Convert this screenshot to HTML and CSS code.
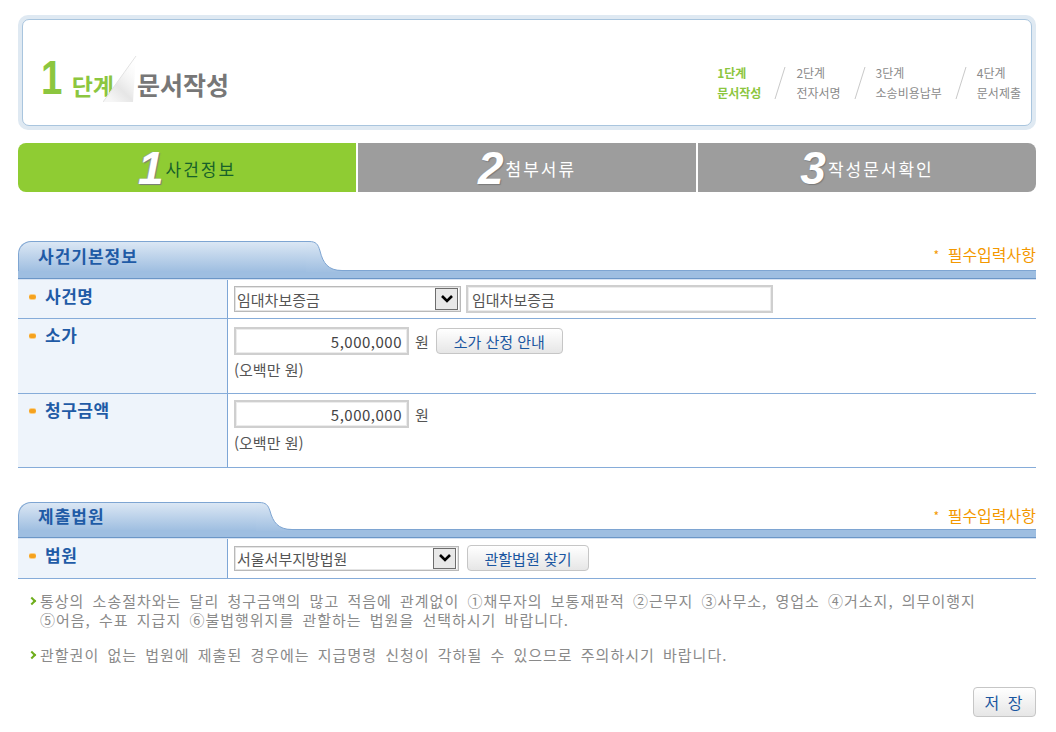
FILE: index.html
```html
<!DOCTYPE html>
<html lang="ko">
<head>
    <meta charset="UTF-8">
    <meta name="viewport" content="width=device-width, initial-scale=1.0">
    <title>지급명령 신청 - 문서작성</title>
    <link rel="stylesheet" href="styles.css">
</head>
<body>

<div class="wrap">

    <!-- 단계 헤더 -->
    <div class="head">
        <div class="head-in">
            <div class="title">
                <span class="title-num">1</span>
                <span class="title-step">단계</span>
                <svg class="title-fold" width="34" height="50" viewBox="0 0 34 50">
                    <defs>
                        <linearGradient id="fold" x1="1" y1="0" x2="0.3" y2="1">
                            <stop offset="0" stop-color="#ffffff" stop-opacity="0"/>
                            <stop offset="0.7" stop-color="#e6e6e6"/>
                            <stop offset="1" stop-color="#f6f6f6"/>
                        </linearGradient>
                    </defs>
                    <polygon points="33,2 0,48 30,48" fill="url(#fold)"/>
                    <line x1="33" y1="2" x2="0" y2="48" stroke="#e2e2e2" stroke-width="1"/>
                </svg>
                <span class="title-name">문서작성</span>
            </div>
            <ul class="step-list">
                <li class="on"><span>1단계</span><span>문서작성</span></li>
                <li class="sep"><svg width="14" height="34"><line x1="12" y1="1" x2="2" y2="33" stroke="#c9c9c9"/></svg></li>
                <li><span>2단계</span><span>전자서명</span></li>
                <li class="sep"><svg width="14" height="34"><line x1="12" y1="1" x2="2" y2="33" stroke="#c9c9c9"/></svg></li>
                <li><span>3단계</span><span>소송비용납부</span></li>
                <li class="sep"><svg width="14" height="34"><line x1="12" y1="1" x2="2" y2="33" stroke="#c9c9c9"/></svg></li>
                <li><span>4단계</span><span>문서제출</span></li>
            </ul>
        </div>
    </div>

    <!-- 작성 단계 탭 -->
    <div class="steps">
        <div class="step active"><span class="step-num">1</span><span class="step-txt">사건정보</span></div>
        <div class="step"><span class="step-num">2</span><span class="step-txt">첨부서류</span></div>
        <div class="step last"><span class="step-num">3</span><span class="step-txt">작성문서확인</span></div>
    </div>

    <!-- 사건기본정보 -->
    <div class="section">
        <div class="sec-head">
            <div class="sec-top">
                <div class="tab">사건기본정보</div>
                <svg class="tab-curve" width="36" height="31" viewBox="0 0 36 31">
                    <defs>
                        <linearGradient id="tabg1" x1="0" y1="0" x2="0" y2="1">
                            <stop offset="0" stop-color="#dbe7f4"/>
                            <stop offset="1" stop-color="#a0bfe1"/>
                        </linearGradient>
                    </defs>
                    <path d="M0,0.5 L3,0.5 C10,0.5 12,3 14,10 C17,22 22,29.5 36,29.5 L36,31 L0,31 Z" fill="url(#tabg1)"/>
                    <path d="M0,0.5 L3,0.5 C10,0.5 12,3 14,10 C17,22 22,29.5 36,29.5" fill="none" stroke="#7ea5d2"/>
                </svg>
                <div class="req"><span class="star">*</span> 필수입력사항</div>
            </div>
            <div class="sec-bar"></div>
        </div>

        <table class="form-table">
            <tr class="row-1">
                <th><span class="dot"></span>사건명</th>
                <td>
                    <div class="field-line">
                        <span class="sel sel-case">
                            <select>
                                <option>임대차보증금</option>
                            </select>
                            <span class="sel-arrow"><svg width="14" height="10" viewBox="0 0 14 10"><path d="M2,2 L7,7 L12,2" fill="none" stroke="#000" stroke-width="2.6"/></svg></span>
                        </span>
                        <input type="text" class="txt txt-case" value="임대차보증금">
                    </div>
                </td>
            </tr>
            <tr class="row-2">
                <th><span class="dot"></span>소가</th>
                <td>
                    <div class="field-line">
                        <input type="text" class="txt txt-money" value="5,000,000">
                        <span class="unit">원</span>
                        <button type="button" class="btn btn-guide">소가 산정 안내</button>
                    </div>
                    <div class="hangul">(오백만 원)</div>
                </td>
            </tr>
            <tr class="row-3">
                <th><span class="dot"></span>청구금액</th>
                <td>
                    <div class="field-line">
                        <input type="text" class="txt txt-money" value="5,000,000">
                        <span class="unit">원</span>
                    </div>
                    <div class="hangul">(오백만 원)</div>
                </td>
            </tr>
        </table>
    </div>

    <!-- 제출법원 -->
    <div class="section section-court">
        <div class="sec-head">
            <div class="sec-top">
                <div class="tab">제출법원</div>
                <svg class="tab-curve" width="36" height="29" viewBox="0 0 36 29">
                    <defs>
                        <linearGradient id="tabg2" x1="0" y1="0" x2="0" y2="1">
                            <stop offset="0" stop-color="#dbe7f4"/>
                            <stop offset="1" stop-color="#a0bfe1"/>
                        </linearGradient>
                    </defs>
                    <path d="M0,0.5 L3,0.5 C10,0.5 12,3 14,9 C17,20 22,27.5 36,27.5 L36,29 L0,29 Z" fill="url(#tabg2)"/>
                    <path d="M0,0.5 L3,0.5 C10,0.5 12,3 14,9 C17,20 22,27.5 36,27.5" fill="none" stroke="#7ea5d2"/>
                </svg>
                <div class="req"><span class="star">*</span> 필수입력사항</div>
            </div>
            <div class="sec-bar"></div>
        </div>

        <table class="form-table">
            <tr class="row-court">
                <th><span class="dot"></span>법원</th>
                <td>
                    <div class="field-line">
                        <span class="sel sel-court">
                            <select>
                                <option>서울서부지방법원</option>
                            </select>
                            <span class="sel-arrow"><svg width="14" height="10" viewBox="0 0 14 10"><path d="M2,2 L7,7 L12,2" fill="none" stroke="#000" stroke-width="2.6"/></svg></span>
                        </span>
                        <button type="button" class="btn btn-court">관할법원 찾기</button>
                    </div>
                </td>
            </tr>
        </table>

        <div class="notes">
            <p>통상의 소송절차와는 달리 청구금액의 많고 적음에 관계없이 ①채무자의 보통재판적 ②근무지 ③사무소, 영업소 ④거소지, 의무이행지<br>⑤어음, 수표 지급지 ⑥불법행위지를 관할하는 법원을 선택하시기 바랍니다.</p>
            <p>관할권이 없는 법원에 제출된 경우에는 지급명령 신청이 각하될 수 있으므로 주의하시기 바랍니다.</p>
        </div>
    </div>

    <div class="actions">
        <button type="button" class="btn btn-save">저 장</button>
    </div>

</div>

</body>
</html>
```

FILE: styles.css
```css
body {
    margin: 0;
    padding: 0;
    background-color: #fff;
    font-family: "Noto Sans CJK KR", "Liberation Sans", sans-serif;
    color: #555;
}

.wrap {
    width: 1018px;
    margin: 15px 0 0 18px;
}

/* header */
.head {
    background-color: #dfe9f2;
    border-radius: 10px;
    padding: 4px;
}

.head-in {
    height: 105px;
    background-color: #fff;
    border: 1px solid #a9c5de;
    border-radius: 7px;
    display: flex;
    justify-content: space-between;
    align-items: center;
    padding: 0 10px 0 18px;
}

.title {
    display: flex;
    align-items: flex-end;
    height: 50px;
    margin-top: 4px;
}

.title-num {
    font-family: "Liberation Sans", sans-serif;
    font-weight: bold;
    font-size: 48px;
    line-height: 44px;
    color: #8cc63f;
    display: inline-block;
    transform: scaleX(0.8);
    transform-origin: left bottom;
}

.title-step {
    font-size: 23px;
    font-weight: bold;
    line-height: 30px;
    color: #8cc63f;
    margin-left: 4px;
}

.title-fold {
    margin-left: -11px;
    margin-bottom: -4px;
}

.title-name {
    font-size: 25px;
    font-weight: bold;
    line-height: 32px;
    color: #777;
    margin-left: 0;
}

.step-list {
    list-style: none;
    margin: 20px 0 0 0;
    padding: 0;
    display: flex;
    align-items: center;
}

.step-list li {
    display: flex;
    flex-direction: column;
    font-size: 12px;
    line-height: 20px;
    color: #8a8a8a;
}

.step-list li.on {
    color: #8cc63f;
    font-weight: bold;
}

.step-list li.sep {
    margin: 0 9px 0 12px;
}

/* steps bar */
.steps {
    display: flex;
    gap: 2px;
    margin-top: 13px;
    height: 49px;
}

.step {
    flex: 1;
    background-color: #9d9d9d;
    display: flex;
    justify-content: center;
    align-items: center;
    color: #fff;
}

.step.active {
    background-color: #8fcc33;
    color: #17612a;
    border-radius: 8px 0 0 8px;
}

.step.last {
    border-radius: 0 8px 8px 0;
}

.step-num {
    font-family: "Liberation Sans", sans-serif;
    font-weight: bold;
    font-style: italic;
    font-size: 46px;
    line-height: 44px;
    color: #fff;
    text-shadow: 1px 1px 1px #7a7a7a, -1px 0 1px #9a9a9a;
    margin-right: 2px;
}

.step-txt {
    font-size: 17px;
    letter-spacing: 2px;
    margin-top: 2px;
}

/* section */
.section {
    margin-top: 49px;
}

.section-court {
    margin-top: 34px;
}

.sec-top {
    display: flex;
    align-items: flex-start;
    height: 30px;
    position: relative;
    z-index: 1;
    margin-bottom: -1px;
}

.tab {
    width: 288px;
    height: 30px;
    padding-left: 19px;
    box-sizing: border-box;
    background: linear-gradient(#dbe7f4, #a0bfe1);
    border-top: 1px solid #7ea5d2;
    border-left: 1px solid #7ea5d2;
    border-radius: 13px 0 0 0;
    font-size: 17px;
    font-weight: bold;
    line-height: 28px;
    color: #1f5ba6;
    letter-spacing: 1px;
}

.section-court .sec-top {
    height: 28px;
}

.section-court .tab {
    width: 238px;
    height: 28px;
    line-height: 26px;
}

.tab-curve {
    display: block;
}

.req {
    margin-left: auto;
    color: #f39800;
    font-size: 16px;
    line-height: 20px;
    margin-top: 3px;
}

.req .star {
    font-size: 12px;
    vertical-align: 1px;
    margin-right: 4px;
}

.sec-bar {
    height: 7px;
    background-color: #9ebee1;
    border-top: 1px solid #7ea5d2;
    border-bottom: 1px solid #6b96c7;
    box-shadow: 0 1px 0 #d6e2f2;
}

/* form table */
.form-table {
    width: 100%;
    border-collapse: collapse;
    margin-top: 1px;
}

.form-table th {
    width: 198px;
    background-color: #eef4fb;
    border-right: 1px solid #7ea6d6;
    border-bottom: 1px solid #86acd9;
    text-align: left;
    vertical-align: top;
    padding: 6px 0 0 11px;
    font-size: 17px;
    line-height: 20px;
    color: #1f5ba6;
    font-weight: bold;
    letter-spacing: 0.5px;
}

.form-table td {
    border-bottom: 1px solid #86acd9;
    padding: 5px 6px;
    vertical-align: top;
    font-size: 15px;
}

.row-2 td {
    padding-top: 8px;
    padding-bottom: 14px;
}

.row-3 td {
    padding-top: 6px;
    padding-bottom: 15px;
}

.row-court td {
    padding-top: 5px;
    padding-bottom: 6px;
}

.field-line {
    display: flex;
    align-items: center;
    height: 28px;
}

.dot {
    display: inline-block;
    width: 7px;
    height: 4px;
    background-color: #f5a21f;
    border-radius: 2px;
    margin-right: 9px;
    vertical-align: 4px;
    box-shadow: 0 -1px 0 #fbd08a, 0 1px 0 #fbd08a;
}

.sel {
    position: relative;
    display: block;
}

.sel select {
    appearance: none;
    -webkit-appearance: none;
    height: 26px;
    border: 1px solid #b9b9b9;
    box-shadow: inset 0 0 0 1px #e4e4e4;
    background-color: #fff;
    font-family: "Noto Sans CJK KR", sans-serif;
    font-size: 15px;
    color: #555;
    padding: 0 0 0 2px;
    border-radius: 0;
    display: block;
}

.sel-case select {
    width: 227px;
}

.sel-court select {
    width: 225px;
    height: 25px;
}

.sel-arrow {
    position: absolute;
    right: 3px;
    top: 2px;
    width: 21px;
    height: 20px;
    border: 1px solid #6d6d6d;
    background-color: #e8e8e8;
    display: flex;
    justify-content: center;
    align-items: center;
    pointer-events: none;
}

.sel-court .sel-arrow {
    height: 19px;
}

.txt {
    height: 28px;
    box-sizing: border-box;
    border: 2px solid #cfcfcf;
    box-shadow: inset 0 0 0 1px #ececec;
    font-family: "Noto Sans CJK KR", sans-serif;
    font-size: 15px;
    color: #555;
    padding: 0 4px;
    outline: none;
}

.txt-case {
    width: 307px;
    margin-left: 5px;
}

.txt-money {
    width: 175px;
    text-align: right;
    padding-right: 5px;
    letter-spacing: 0.5px;
    color: #444;
}

.unit {
    font-size: 15px;
    color: #555;
    margin: 0 7px 0 6px;
}

.btn {
    height: 26px;
    border: 1px solid #c6c6c6;
    border-radius: 4px;
    background: linear-gradient(#ffffff, #e6e6e6);
    font-family: "Noto Sans CJK KR", sans-serif;
    font-size: 15px;
    color: #1a56a0;
    padding: 0;
    cursor: pointer;
}

.btn-guide {
    width: 127px;
}

.btn-court {
    width: 122px;
    margin-left: 8px;
}

.hangul {
    margin-top: 6px;
    font-size: 15px;
    line-height: 18px;
    color: #555;
}

/* notes */
.notes {
    padding: 12px 0 0 11px;
}

.notes p {
    margin: 0 0 16px 0;
    padding-left: 11px;
    position: relative;
    font-size: 15px;
    line-height: 19px;
    letter-spacing: 1px;
    word-spacing: 3px;
    color: #8a8a8a;
}

.notes p::before {
    content: "";
    position: absolute;
    left: 0;
    top: 7px;
    width: 4px;
    height: 4px;
    border-top: 2px solid #6fae1d;
    border-right: 2px solid #6fae1d;
    transform: rotate(45deg);
}

.actions {
    text-align: right;
    margin-top: 23px;
}

.btn-save {
    width: 63px;
    height: 30px;
    font-size: 16px;
    letter-spacing: 2px;
}
```
